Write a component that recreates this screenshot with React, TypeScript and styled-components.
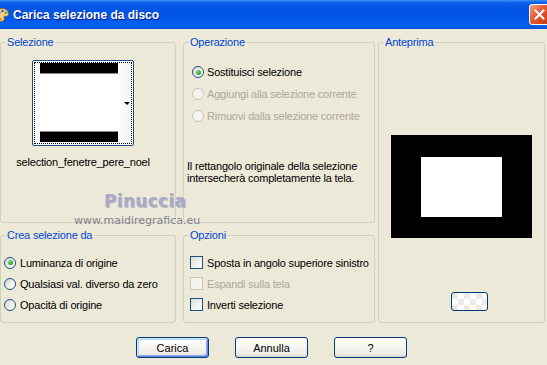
import React from 'react';
import styled, { createGlobalStyle } from 'styled-components';

const GlobalStyle = createGlobalStyle`
  html, body {
    margin: 0;
    padding: 0;
    background: #ece9d8;
  }
  body {
    font-family: "Liberation Sans", Arial, sans-serif;
    font-size: 11px;
    letter-spacing: -0.2px;
  }
`;

const AppIcon: React.FC = () => (
  <IconSvg width="16" height="16" viewBox="0 0 16 16">
    <path d="M8 1.5c3.8 0 6.5 2.4 6.5 5.4 0 2-1.6 2.6-3 2.3-1.2-.3-1.9.5-1.4 1.6.6 1.4-.3 3.7-3.1 3.7C3.9 14.5 1.5 11.6 1.5 8 1.5 4.4 4.3 1.5 8 1.5z" fill="#f6d38a" stroke="#9a5a1a" strokeWidth="0.8" />
    <circle cx="5" cy="5.5" r="1.5" fill="#e23a2a" />
    <circle cx="8.5" cy="4" r="1.3" fill="#2a6fe2" />
    <circle cx="11.8" cy="5.6" r="1.2" fill="#2fa83a" />
    <circle cx="4.2" cy="9.5" r="1.4" fill="#ffffff" />
    <circle cx="6.5" cy="12" r="1.2" fill="#e8871e" />
  </IconSvg>
);

const CloseGlyph: React.FC = () => (
  <svg width="11" height="11" viewBox="0 0 11 11">
    <path d="M1.5 1.5l8 8M9.5 1.5l-8 8" stroke="#fff" strokeWidth="2" strokeLinecap="square" />
  </svg>
);

type Choice = { label: string; checked?: boolean; disabled?: boolean };

const operations: Choice[] = [
  { label: 'Sostituisci selezione', checked: true },
  { label: 'Aggiungi alla selezione corrente', disabled: true },
  { label: 'Rimuovi dalla selezione corrente', disabled: true },
];

const sources: Choice[] = [
  { label: 'Luminanza di origine', checked: true },
  { label: 'Qualsiasi val. diverso da zero' },
  { label: 'Opacità di origine' },
];

const options: Choice[] = [
  { label: 'Sposta in angolo superiore sinistro' },
  { label: 'Espandi sulla tela', disabled: true },
  { label: 'Inverti selezione' },
];

const App: React.FC = () => (
  <>
    <GlobalStyle />
    <Window>
      <TitleBar>
        <AppIcon />
        <Title>Carica selezione da disco</Title>
        <CloseButton>
          <CloseGlyph />
        </CloseButton>
      </TitleBar>

      <Body>
        <Panels>
          <Group $area="sel">
            <Legend>Selezione</Legend>
            <SelectionContent>
              <Thumb>
                <FocusRect>
                  <ThumbCanvas>
                    <ThumbBar $edge="top" />
                    <ThumbBar $edge="bottom" />
                  </ThumbCanvas>
                  <ThumbStrip>
                    <DropArrow />
                  </ThumbStrip>
                </FocusRect>
              </Thumb>
              <Caption>selection_fenetre_pere_noel</Caption>
            </SelectionContent>
          </Group>

          <Group $area="op">
            <Legend>Operazione</Legend>
            <ChoiceList $top={12} $left={8}>
              {operations.map((c) => (
                <ChoiceRow key={c.label} $height={22} $gap={3} $disabled={c.disabled}>
                  <Radio $checked={c.checked} $disabled={c.disabled} />
                  {c.label}
                </ChoiceRow>
              ))}
            </ChoiceList>
            <Description>
              Il rettangolo originale della selezione
              <br />
              intersecherà completamente la tela.
            </Description>
          </Group>

          <Group $area="pre">
            <Legend>Anteprima</Legend>
            <PreviewContent>
              <PreviewCanvas>
                <PreviewSelection />
              </PreviewCanvas>
              <PatternButton />
            </PreviewContent>
          </Group>

          <Group $area="crea">
            <Legend>Crea selezione da</Legend>
            <ChoiceList $top={10} $left={3}>
              {sources.map((c) => (
                <ChoiceRow key={c.label} $height={21} $gap={4} $disabled={c.disabled}>
                  <Radio $checked={c.checked} $disabled={c.disabled} />
                  {c.label}
                </ChoiceRow>
              ))}
            </ChoiceList>
          </Group>

          <Group $area="opz">
            <Legend>Opzioni</Legend>
            <ChoiceList $top={10} $left={6}>
              {options.map((c) => (
                <ChoiceRow key={c.label} $height={21} $gap={4} $disabled={c.disabled}>
                  <Checkbox $disabled={c.disabled} />
                  {c.label}
                </ChoiceRow>
              ))}
            </ChoiceList>
          </Group>
        </Panels>

        <ButtonRow>
          <PushButton $default>Carica</PushButton>
          <PushButton>Annulla</PushButton>
          <PushButton>?</PushButton>
        </ButtonRow>
      </Body>

      <Watermark>
        <WatermarkName>Pinuccia</WatermarkName>
        <WatermarkSite>www.maidiregrafica.eu</WatermarkSite>
      </Watermark>
    </Window>
  </>
);

const Window = styled.div`
  position: relative;
  width: 547px;
  height: 365px;
  overflow: hidden;
  background: #ece9d8;
`;

const TitleBar = styled.div`
  display: flex;
  align-items: center;
  height: 29px;
  background: linear-gradient(
    to bottom,
    #3d8ff5 0%,
    #0a5ee8 10%,
    #0054e3 35%,
    #0058ea 70%,
    #0563f2 88%,
    #0250d8 100%
  );
`;

const IconSvg = styled.svg`
  flex-shrink: 0;
  margin-left: -6px;
`;

const Title = styled.span`
  margin-left: 3px;
  color: #fff;
  font-family: "Liberation Sans", Arial, sans-serif;
  font-weight: bold;
  font-size: 12px;
  letter-spacing: 0;
  text-shadow: 1px 1px 0 #0a1e8c;
`;

const CloseButton = styled.div`
  box-sizing: border-box;
  display: flex;
  align-items: center;
  justify-content: center;
  width: 21px;
  height: 21px;
  margin-left: auto;
  margin-right: -3px;
  border: 1px solid #fff;
  border-radius: 3px;
  background: linear-gradient(135deg, #f2a489 0%, #e7663f 35%, #d9491f 70%, #c23d1a 100%);
`;

const Body = styled.div`
  padding: 7px 2px 0 0;
`;

const Panels = styled.div`
  display: grid;
  grid-template-columns: 176px 7px 192px 3px 167px;
  grid-template-rows: 187px 94px;
  row-gap: 6px;
  grid-template-areas:
    "sel . op . pre"
    "crea . opz . pre";
`;

const Group = styled.fieldset<{ $area: string }>`
  grid-area: ${({ $area }) => $area};
  box-sizing: border-box;
  min-width: 0;
  margin: 0;
  padding: 0;
  border: 1px solid #d0d0bf;
  border-radius: 3px;
`;

const Legend = styled.legend`
  margin-left: 4px;
  padding: 0 2px;
  color: #0046d5;
  font-size: 11px;
  line-height: 13px;
`;

const SelectionContent = styled.div`
  display: flex;
  flex-direction: column;
  align-items: center;
  padding: 11px 10px 0 0;
`;

const Thumb = styled.div`
  box-sizing: border-box;
  width: 102px;
  height: 86px;
  padding: 1px;
  border: 1px solid #1f4e84;
  border-radius: 2px;
  background: #fff;
`;

const FocusRect = styled.div`
  box-sizing: border-box;
  display: flex;
  height: 100%;
  border: 1px dotted #000;
`;

const ThumbCanvas = styled.div`
  display: flex;
  flex-direction: column;
  justify-content: space-between;
  width: 78px;
  margin-left: 5px;
  padding-bottom: 1px;
`;

const ThumbBar = styled.div<{ $edge: 'top' | 'bottom' }>`
  height: 10px;
  background: #000;
  ${({ $edge }) =>
    $edge === 'top' ? 'border-bottom: 1px solid #8a8a8a;' : 'border-top: 1px solid #8a8a8a;'}
`;

const ThumbStrip = styled.div`
  flex: 1;
  display: flex;
  align-items: center;
  justify-content: flex-end;
  padding-right: 1px;
  background: linear-gradient(to right, #fff, #f1f1ef);
`;

const DropArrow = styled.span`
  width: 0;
  height: 0;
  border-left: 3px solid transparent;
  border-right: 3px solid transparent;
  border-top: 3px solid #000;
`;

const Caption = styled.div`
  margin-top: 10px;
  line-height: 13px;
  color: #000;
  white-space: nowrap;
`;

const ChoiceList = styled.div<{ $top: number; $left: number }>`
  display: flex;
  flex-direction: column;
  padding: ${({ $top, $left }) => `${$top}px 0 0 ${$left}px`};
`;

const ChoiceRow = styled.div<{ $height: number; $gap: number; $disabled?: boolean }>`
  display: flex;
  align-items: center;
  gap: ${({ $gap }) => $gap}px;
  height: ${({ $height }) => $height}px;
  color: ${({ $disabled }) => ($disabled ? '#aca899' : '#000')};
  white-space: nowrap;
`;

const Radio = styled.span<{ $checked?: boolean; $disabled?: boolean }>`
  box-sizing: border-box;
  display: flex;
  align-items: center;
  justify-content: center;
  flex-shrink: 0;
  width: 12px;
  height: 12px;
  border-radius: 50%;
  border: 1px solid ${({ $disabled }) => ($disabled ? '#cac8bb' : '#1c5180')};
  background: ${({ $disabled }) =>
    $disabled ? '#f4f3ee' : 'linear-gradient(135deg, #dcd7cb 0%, #f4f3ee 60%, #fff 100%)'};

  &::after {
    content: '';
    display: ${({ $checked }) => ($checked ? 'block' : 'none')};
    width: 5px;
    height: 5px;
    border-radius: 50%;
    background: radial-gradient(circle at 35% 35%, #7be27b 0%, #21a121 70%);
  }
`;

const Checkbox = styled.span<{ $disabled?: boolean }>`
  box-sizing: border-box;
  flex-shrink: 0;
  width: 13px;
  height: 13px;
  border: 1px solid ${({ $disabled }) => ($disabled ? '#cac8bb' : '#1c5180')};
  background: ${({ $disabled }) =>
    $disabled ? '#f4f3ee' : 'linear-gradient(135deg, #dcdcd7 0%, #f2f2ef 60%, #fff 100%)'};
`;

const Description = styled.div`
  margin-top: 33px;
  padding-left: 3px;
  line-height: 12px;
  color: #000;
`;

const PreviewContent = styled.div`
  display: flex;
  flex-direction: column;
  align-items: center;
  padding-top: 86px;
`;

const PreviewCanvas = styled.div`
  box-sizing: border-box;
  display: flex;
  width: 141px;
  height: 103px;
  padding: 22px 30px 21px 30px;
  background: #000;
`;

const PreviewSelection = styled.div`
  flex: 1;
  background: #fff;
`;

const PatternButton = styled.div`
  box-sizing: border-box;
  width: 37px;
  height: 19px;
  margin: 54px 0 0 16px;
  border: 1px solid #003c74;
  border-radius: 3px;
  background: repeating-conic-gradient(#ffffff 0 25%, #ebebe8 0 50%) 0 0 / 12px 12px;
  background-clip: padding-box;
`;

const ButtonRow = styled.div`
  display: flex;
  gap: 26px;
  padding: 14px 0 0 136px;
`;

const PushButton = styled.button<{ $default?: boolean }>`
  box-sizing: border-box;
  width: 73px;
  height: 21px;
  padding: 0;
  border: 1px solid #003c74;
  border-radius: 3px;
  font: inherit;
  color: #000;
  background: linear-gradient(to bottom, #ffffff 0%, #f5f4f0 50%, #ecebe6 85%, #d6d0c5 100%);
  box-shadow: ${({ $default }) =>
    $default ? 'inset 1px 1px 0 #cee7ff, inset -1px -1px 0 #6982ee, inset 2px 2px 0 #bcd4f6, inset -2px -2px 0 #89ade4' : 'none'};
`;

const Watermark = styled.div`
  position: absolute;
  left: 74px;
  top: 191px;
  display: flex;
  flex-direction: column;
  pointer-events: none;
`;

const WatermarkName = styled.span`
  margin-left: 30px;
  font-family: "DejaVu Sans", Verdana, sans-serif;
  font-weight: bold;
  font-size: 17px;
  line-height: 20px;
  letter-spacing: 0.3px;
  color: #a9a9c9;
  text-shadow: 1px 1px 0 rgba(90, 90, 120, 0.35);
`;

const WatermarkSite = styled.span`
  margin-top: 3px;
  font-family: "DejaVu Sans", Verdana, sans-serif;
  font-size: 11px;
  line-height: 13px;
  letter-spacing: 0;
  color: #80808e;
`;

export default App;
